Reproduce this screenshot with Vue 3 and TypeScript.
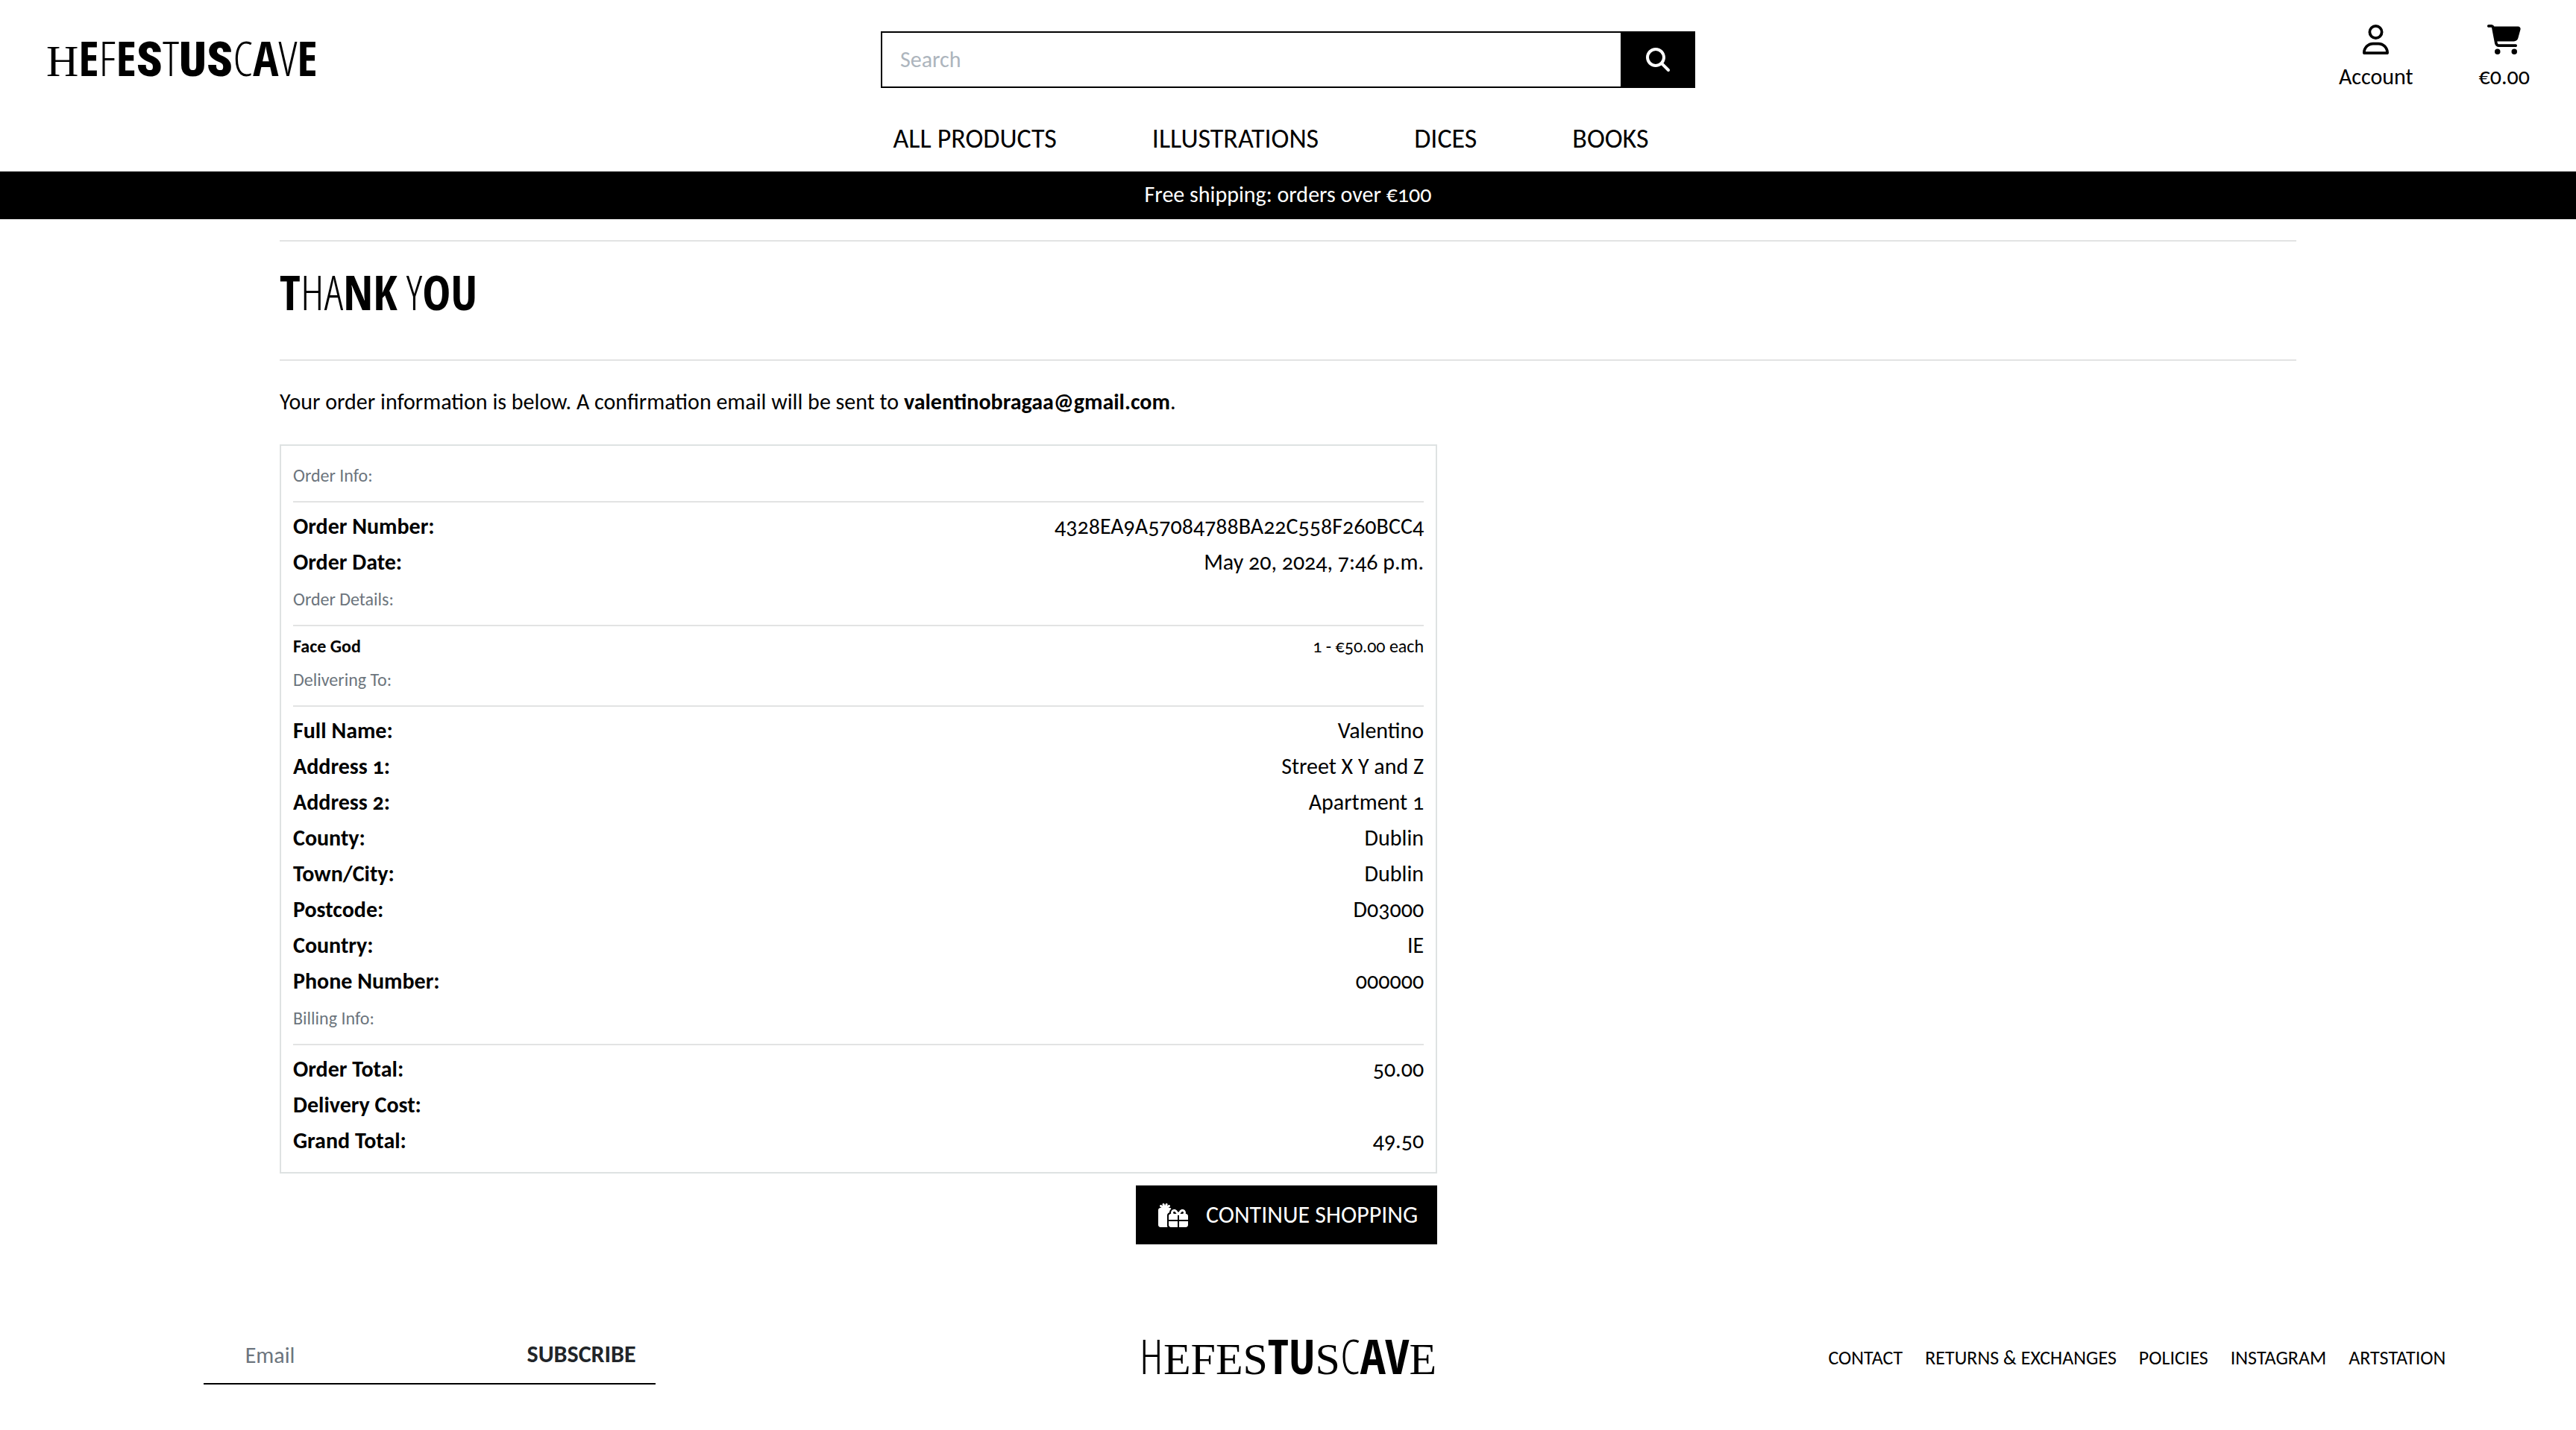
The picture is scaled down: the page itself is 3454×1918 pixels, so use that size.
<script setup lang="ts">
type Face = 'heavy' | 'bold' | 'thin' | 'serif'
interface Glyph { char: string; face: Face }
interface Row { label: string; value: string; small?: boolean }
interface Section { title: string; rows: Row[] }

// The display lettering changes face from one letter to the next.
const faces: Record<string, Face> = { h: 'heavy', b: 'bold', t: 'thin', s: 'serif' }
const letter = (word: string, pattern: string): Glyph[] =>
  [...word].map((char, i) => ({ char, face: faces[pattern[i]] ?? 'bold' }))

const headerLogo = letter('HEFESTUSCAVE', 'sbtbhthhtbtb')
const footerLogo = letter('HEFESTUSCAVE', 'tssssbbstbbs')
const heading = letter('THANK YOU', 'bttbbttbb')

const categories = ['ALL PRODUCTS', 'ILLUSTRATIONS', 'DICES', 'BOOKS']
const footerLinks = ['CONTACT', 'RETURNS & EXCHANGES', 'POLICIES', 'INSTAGRAM', 'ARTSTATION']

const sections: Section[] = [
  {
    title: 'Order Info:',
    rows: [
      { label: 'Order Number:', value: '4328EA9A57084788BA22C558F260BCC4' },
      { label: 'Order Date:', value: 'May 20, 2024, 7:46 p.m.' },
    ],
  },
  {
    title: 'Order Details:',
    rows: [{ label: 'Face God', value: '1 - €50.00 each', small: true }],
  },
  {
    title: 'Delivering To:',
    rows: [
      { label: 'Full Name:', value: 'Valentino' },
      { label: 'Address 1:', value: 'Street X Y and Z' },
      { label: 'Address 2:', value: 'Apartment 1' },
      { label: 'County:', value: 'Dublin' },
      { label: 'Town/City:', value: 'Dublin' },
      { label: 'Postcode:', value: 'D03000' },
      { label: 'Country:', value: 'IE' },
      { label: 'Phone Number:', value: '000000' },
    ],
  },
  {
    title: 'Billing Info:',
    rows: [
      { label: 'Order Total:', value: '50.00' },
      { label: 'Delivery Cost:', value: '' },
      { label: 'Grand Total:', value: '49.50' },
    ],
  },
]
</script>

<template>
  <div class="page">
    <header class="header">
      <div class="topbar">
        <a href="#" class="display brand"><span v-for="(g, i) in headerLogo" :key="i" :class="g.face">{{ g.char }}</span></a>
        <form class="search" role="search" @submit.prevent>
          <input type="search" placeholder="Search" aria-label="Search" />
          <button type="submit" aria-label="Search">
            <svg viewBox="0 0 512 512" width="32" height="32" fill="currentColor" aria-hidden="true">
              <path d="M416 208c0 45.900-14.900 88.300-40 122.700L502.600 457.400c12.500 12.500 12.500 32.800 0 45.300s-32.800 12.500-45.300 0L330.700 376c-34.400 25.200-76.800 40-122.700 40C93.100 416 0 322.900 0 208S93.100 0 208 0S416 93.100 416 208zM208 352a144 144 0 1 0 0-288 144 144 0 1 0 0 288z" />
            </svg>
          </button>
        </form>
        <div class="tools">
          <a href="#">
            <svg viewBox="0 0 448 512" width="35" height="40" fill="currentColor" aria-hidden="true">
              <path d="M304 128a80 80 0 1 0 -160 0 80 80 0 1 0 160 0zM96 128a128 128 0 1 1 256 0A128 128 0 1 1 96 128zM49.300 464H398.700c-8.900-63.300-63.300-112-129-112H178.300c-65.700 0-120.100 48.700-129 112zM0 482.300C0 383.800 79.800 304 178.300 304h91.400C368.200 304 448 383.800 448 482.300c0 16.400-13.300 29.700-29.700 29.700H29.700C13.300 512 0 498.700 0 482.300z" />
            </svg>
            <span>Account</span>
          </a>
          <a href="#">
            <svg viewBox="0 0 576 512" width="45" height="40" fill="currentColor" aria-hidden="true">
              <path d="M0 24C0 10.700 10.700 0 24 0H69.500c22 0 41.500 12.800 50.600 32h411c26.300 0 45.500 25 38.600 50.400l-41 152.300c-8.500 31.400-37 53.300-69.500 53.300H170.700l5.400 28.500c2.200 11.300 12.100 19.500 23.600 19.500H488c13.300 0 24 10.700 24 24s-10.700 24-24 24H199.700c-34.600 0-64.300-24.600-70.700-58.500L77.400 54.500c-.7-3.800-4-6.500-7.900-6.500H24C10.700 48 0 37.300 0 24zM128 464a48 48 0 1 1 96 0 48 48 0 1 1 -96 0zm336-48a48 48 0 1 1 0 96 48 48 0 1 1 0-96z" />
            </svg>
            <span>€0.00</span>
          </a>
        </div>
      </div>
      <nav class="categories">
        <a v-for="c in categories" :key="c" href="#">{{ c }}</a>
      </nav>
      <p class="banner">Free shipping: orders over €100</p>
    </header>

    <main class="content">
      <hr />
      <h1 class="display"><span v-for="(g, i) in heading" :key="i" :class="g.face">{{ g.char }}</span></h1>
      <hr />
      <p class="intro">
        Your order information is below. A confirmation email will be sent to <strong>valentinobragaa@gmail.com</strong>.
      </p>
      <div class="order">
        <div class="summary">
          <section v-for="s in sections" :key="s.title">
            <h2>{{ s.title }}</h2>
            <dl>
              <div v-for="r in s.rows" :key="r.label" class="row" :class="{ small: r.small }">
                <dt>{{ r.label }}</dt>
                <dd>{{ r.value }}</dd>
              </div>
            </dl>
          </section>
        </div>
        <a href="#" class="continue">
          <svg viewBox="0 0 640 512" width="40" height="32" fill="currentColor" aria-hidden="true">
            <path d="M200.600 32C205 19.500 198.500 5.800 186 1.400S159.800 3.500 155.400 16L144.700 46.200l-9.900-29.800C130.600 3.800 117-3 104.400 1.200S85 19 89.200 31.600l8.300 25-27.400-20c-10.700-7.800-25.700-5.400-33.500 5.300s-5.400 25.700 5.300 33.500L70.200 96H48C21.500 96 0 117.500 0 144V464c0 26.500 21.500 48 48 48H200.600c-5.400-9.400-8.600-20.300-8.600-32V256c0-29.900 20.500-55 48.200-62c1.800-31 17.100-58.200 40.100-76.100C271.700 104.700 256.900 96 240 96H217.800l28.300-20.600c10.700-7.800 13.100-22.800 5.300-33.500s-22.800-13.100-33.500-5.300L192.500 55.100 200.600 32zM363.500 185.500L393.100 224H344c-13.300 0-24-10.700-24-24c0-13.100 10.800-24 24.200-24c7.600 0 14.700 3.500 19.300 9.500zM272 200c0 8.400 1.400 16.500 4.100 24H272c-26.500 0-48 21.500-48 48v80H416V256h32v96H640V272c0-26.500-21.500-48-48-48h-4.100c2.700-7.500 4.100-15.600 4.100-24c0-39.900-32.500-72-72.200-72c-22.400 0-43.600 10.400-57.300 28.200L432 195.800l-30.500-39.600c-13.700-17.800-35-28.200-57.300-28.200c-39.700 0-72.200 32.100-72.200 72zM224 464c0 26.500 21.500 48 48 48H416V384H224v80zm224 48H592c26.500 0 48-21.500 48-48V384H448V512zm96-312c0 13.300-10.700 24-24 24H470.900l29.600-38.500c4.600-5.900 11.700-9.500 19.300-9.500c13.400 0 24.200 10.900 24.200 24z" />
          </svg>
          CONTINUE SHOPPING
        </a>
      </div>
    </main>

    <footer class="footer">
      <form class="subscribe" @submit.prevent>
        <input type="email" placeholder="Email" aria-label="Email" />
        <button type="submit">SUBSCRIBE</button>
      </form>
      <a href="#" class="display"><span v-for="(g, i) in footerLogo" :key="i" :class="g.face">{{ g.char }}</span></a>
      <nav class="links">
        <a v-for="l in footerLinks" :key="l" href="#">{{ l }}</a>
      </nav>
    </footer>
  </div>
</template>

<style>
body {
  margin: 0;
  background: #fff;
}
</style>

<style scoped>
* {
  box-sizing: border-box;
}

.page {
  color: #000;
  font-family: Carlito, Lato, sans-serif;
  font-size: 30px;
  line-height: 48px;
  font-variant-numeric: oldstyle-nums;
}

a {
  color: inherit;
  text-decoration: none;
}

input,
button {
  border: 0;
  padding: 0;
  background: none;
  color: inherit;
  font: inherit;
  outline: 0;
}

hr {
  height: 2px;
  margin: 0;
  border: 0;
  background: #e2e3e3;
}

svg {
  display: block;
  flex: none;
}

/* Display lettering */
.display {
  margin: 0;
  font-size: 64px;
  font-weight: 400;
  line-height: 76px;
  white-space: pre;
}

.heavy {
  font-family: "Roboto Condensed", Roboto, sans-serif;
  font-weight: 900;
}

.bold {
  font-family: "Open Sans Condensed", "Open Sans", sans-serif;
  font-weight: 700;
}

.thin {
  font-family: "Open Sans Condensed Light", "Open Sans Condensed", "Open Sans", sans-serif;
  font-weight: 300;
}

.serif {
  font-family: "Liberation Serif", serif;
  font-size: 60px;
}

/* Header */
.topbar {
  display: grid;
  grid-template-columns: 1fr 1092px 1fr;
  align-items: start;
  padding: 33px 62px 0;
}

.brand {
  justify-self: start;
  margin-top: 7px;
}

.search {
  display: flex;
  height: 76px;
  margin-top: 9px;
}

.search input {
  flex: 1;
  min-width: 0;
  padding: 0 24px;
  border: 2px solid #000;
  border-right: 0;
  appearance: none;
}

.search input::placeholder {
  color: #adb5bd;
  opacity: 1;
}

.search button {
  display: grid;
  place-items: center;
  width: 100px;
  background: #000;
  color: #fff;
}

.tools {
  display: flex;
  gap: 88px;
  justify-self: end;
}

.tools a {
  display: flex;
  flex-direction: column;
  align-items: center;
  gap: 6px;
}

.categories {
  display: flex;
  justify-content: center;
  gap: 128px;
  padding: 31px 46px 16px 0;
  font-size: 36px;
  line-height: 56px;
}

.banner {
  margin: 0;
  padding: 7px 0 9px;
  background: #000;
  color: #fff;
  text-align: center;
}

/* Order confirmation */
.content {
  width: 79%;
  max-width: 2704px;
  margin: 0 auto;
  padding-top: 28px;
}

h1.display {
  padding: 30px 0 50px;
}

.intro {
  margin: 0;
  padding: 31px 0 33px;
}

.order {
  display: flex;
  flex-direction: column;
  align-items: flex-end;
  gap: 16px;
  width: 57.4%;
}

.summary {
  width: 100%;
  padding: 14px 16px 18px;
  border: 2px solid #dee2e2;
}

h2 {
  margin: 0 0 8px;
  padding-bottom: 8px;
  border-bottom: 2px solid #e2e3e3;
  color: #6c757d;
  font-size: 24px;
  font-weight: 400;
  line-height: 52px;
}

dl {
  margin: 0;
}

.row {
  display: flex;
  justify-content: space-between;
}

.row.small {
  font-size: 24px;
  line-height: 38px;
}

dt {
  font-weight: 700;
}

dd {
  margin: 0;
}

.continue {
  display: flex;
  align-items: center;
  gap: 24px;
  padding: 16px 26px 15px 30px;
  background: #000;
  color: #fff;
  font-size: 32px;
}

/* Footer */
.footer {
  display: grid;
  grid-template-columns: repeat(3, 1fr);
  align-items: center;
  justify-items: center;
  margin-top: 110px;
}

.subscribe {
  display: flex;
  width: 606px;
  margin-bottom: 6px;
  padding: 0 26px 0 56px;
  border-bottom: 2px solid #000;
}

.subscribe input {
  flex: 1;
  min-width: 0;
  height: 76px;
}

.subscribe input::placeholder {
  color: #6c757d;
  opacity: 1;
}

.subscribe button {
  color: #212529;
  font-size: 32px;
  font-weight: 700;
}

.links {
  display: flex;
  gap: 30px;
  padding-right: 26px;
  font-size: 26px;
}
</style>
